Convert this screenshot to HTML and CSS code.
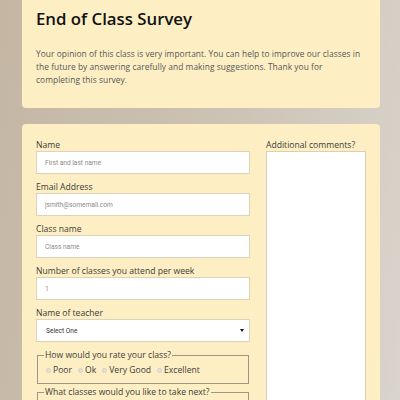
FILE: index.html
```html
<!DOCTYPE html>
<html lang="en">
<head>
<meta charset="utf-8">
<title>End of Class Survey</title>
<link rel="stylesheet" href="styles.css">
</head>
<body>
<div class="page">
  <section class="card intro">
    <h1 class="title">End of Class Survey</h1>
    <p class="lead">Your opinion of this class is very important. You can help to improve our classes in the future by answering carefully and making suggestions. Thank you for completing this survey.</p>
  </section>
  <form class="card survey">
    <div class="col-main">
      <label class="field">
        <span class="label">Name</span>
        <input class="input" type="text" placeholder="First and last name">
      </label>
      <label class="field">
        <span class="label">Email Address</span>
        <input class="input" type="text" placeholder="jsmith@somemail.com">
      </label>
      <label class="field">
        <span class="label">Class name</span>
        <input class="input" type="text" placeholder="Class name">
      </label>
      <label class="field">
        <span class="label">Number of classes you attend per week</span>
        <input class="input value" type="text" value="1">
      </label>
      <label class="field">
        <span class="label">Name of teacher</span>
        <span class="select">Select One<span class="caret"></span></span>
      </label>
      <div class="groups">
        <fieldset class="group">
          <legend class="legend">How would you rate your class?</legend>
          <div class="radios">
            <span class="radio"><span class="dot"></span>Poor</span>
            <span class="radio"><span class="dot"></span>Ok</span>
            <span class="radio"><span class="dot"></span>Very Good</span>
            <span class="radio"><span class="dot"></span>Excellent</span>
          </div>
        </fieldset>
        <fieldset class="group">
          <legend class="legend">What classes would you like to take next?</legend>
          <div class="radios"></div>
        </fieldset>
      </div>
    </div>
    <div class="col-side">
      <span class="label">Additional comments?</span>
      <div class="textarea"></div>
    </div>
  </form>
</div>
</body>
</html>
```
FILE: styles.css
```css
html, body {
  margin: 0;
  padding: 0;
}
body {
  width: 400px;
  height: 400px;
  overflow: hidden;
  background: linear-gradient(100deg, #c4b6a3 0%, #ccc2b3 50%, #d9d4cc 100%);
  font-family: "Open Sans", "DejaVu Sans", sans-serif;
  color: #333;
}
.page {
  padding: 0 20px 0 22px;
  display: flex;
  flex-direction: column;
  gap: 16px;
}
.card {
  background: #fdefc3;
  border-radius: 4px;
}
.intro {
  border-radius: 0 0 4px 4px;
  padding: 6px 14px 0 14px;
  height: 102px;
}
.title {
  margin: 0;
  font-size: 16.8px;
  font-weight: 600;
  color: #111;
  line-height: 26px;
}
.lead {
  margin: 15px 0 0 0;
  font-size: 8.4px;
  line-height: 13px;
  color: #575757;
  letter-spacing: 0.05px;
}
.survey {
  display: grid;
  grid-template-columns: 214px 100px;
  column-gap: 16px;
  padding: 15px 14px 0 14px;
  height: 300px;
}
.col-main {
  display: flex;
  flex-direction: column;
  gap: 7px;
}
.field {
  display: flex;
  flex-direction: column;
}
.label {
  font-size: 8.6px;
  line-height: 12px;
  color: #3c3c3c;
}
.input, .select {
  box-sizing: border-box;
  height: 23px;
  width: 214px;
  border: 1px solid #dcd3bd;
  background: #fff;
  font-family: "Roboto", "Liberation Sans", sans-serif;
  font-size: 6.6px;
  color: #777;
  padding: 0 0 0 8px;
  margin: 0;
  outline: none;
}
.input::placeholder {
  color: #8a8a8a;
}
.value {
  color: #888;
}
.select {
  display: flex;
  align-items: center;
  justify-content: space-between;
  color: #333;
  padding: 0 5px 0 9px;
}
.caret {
  width: 0;
  height: 0;
  border-left: 2px solid transparent;
  border-right: 2px solid transparent;
  border-top: 3px solid #111;
}
.groups {
  display: flex;
  flex-direction: column;
  gap: 2px;
  margin-top: 0;
}
.group {
  margin: 0 0 0 1px;
  padding: 0 0 4px 8px;
  border: 1px solid #9e9682;
  width: 202px;
  min-inline-size: 0;
}
.legend {
  padding: 0 1px;
  margin-left: -2px;
  font-size: 8.6px;
  line-height: 12px;
  color: #3c3c3c;
}
.radios {
  display: flex;
  gap: 6px;
  height: 18px;
  align-items: center;
  font-size: 8.6px;
  color: #3c3c3c;
}
.radio {
  display: flex;
  align-items: center;
  gap: 2px;
}
.dot {
  width: 5px;
  height: 5px;
  border-radius: 50%;
  background: #e6e2d8;
  border: 1px solid #d3cfc5;
  box-sizing: border-box;
}
.col-side {
  display: flex;
  flex-direction: column;
}
.textarea {
  box-sizing: border-box;
  height: 260px;
  border: 1px solid #d8cfb8;
  background: #fff;
}
```
